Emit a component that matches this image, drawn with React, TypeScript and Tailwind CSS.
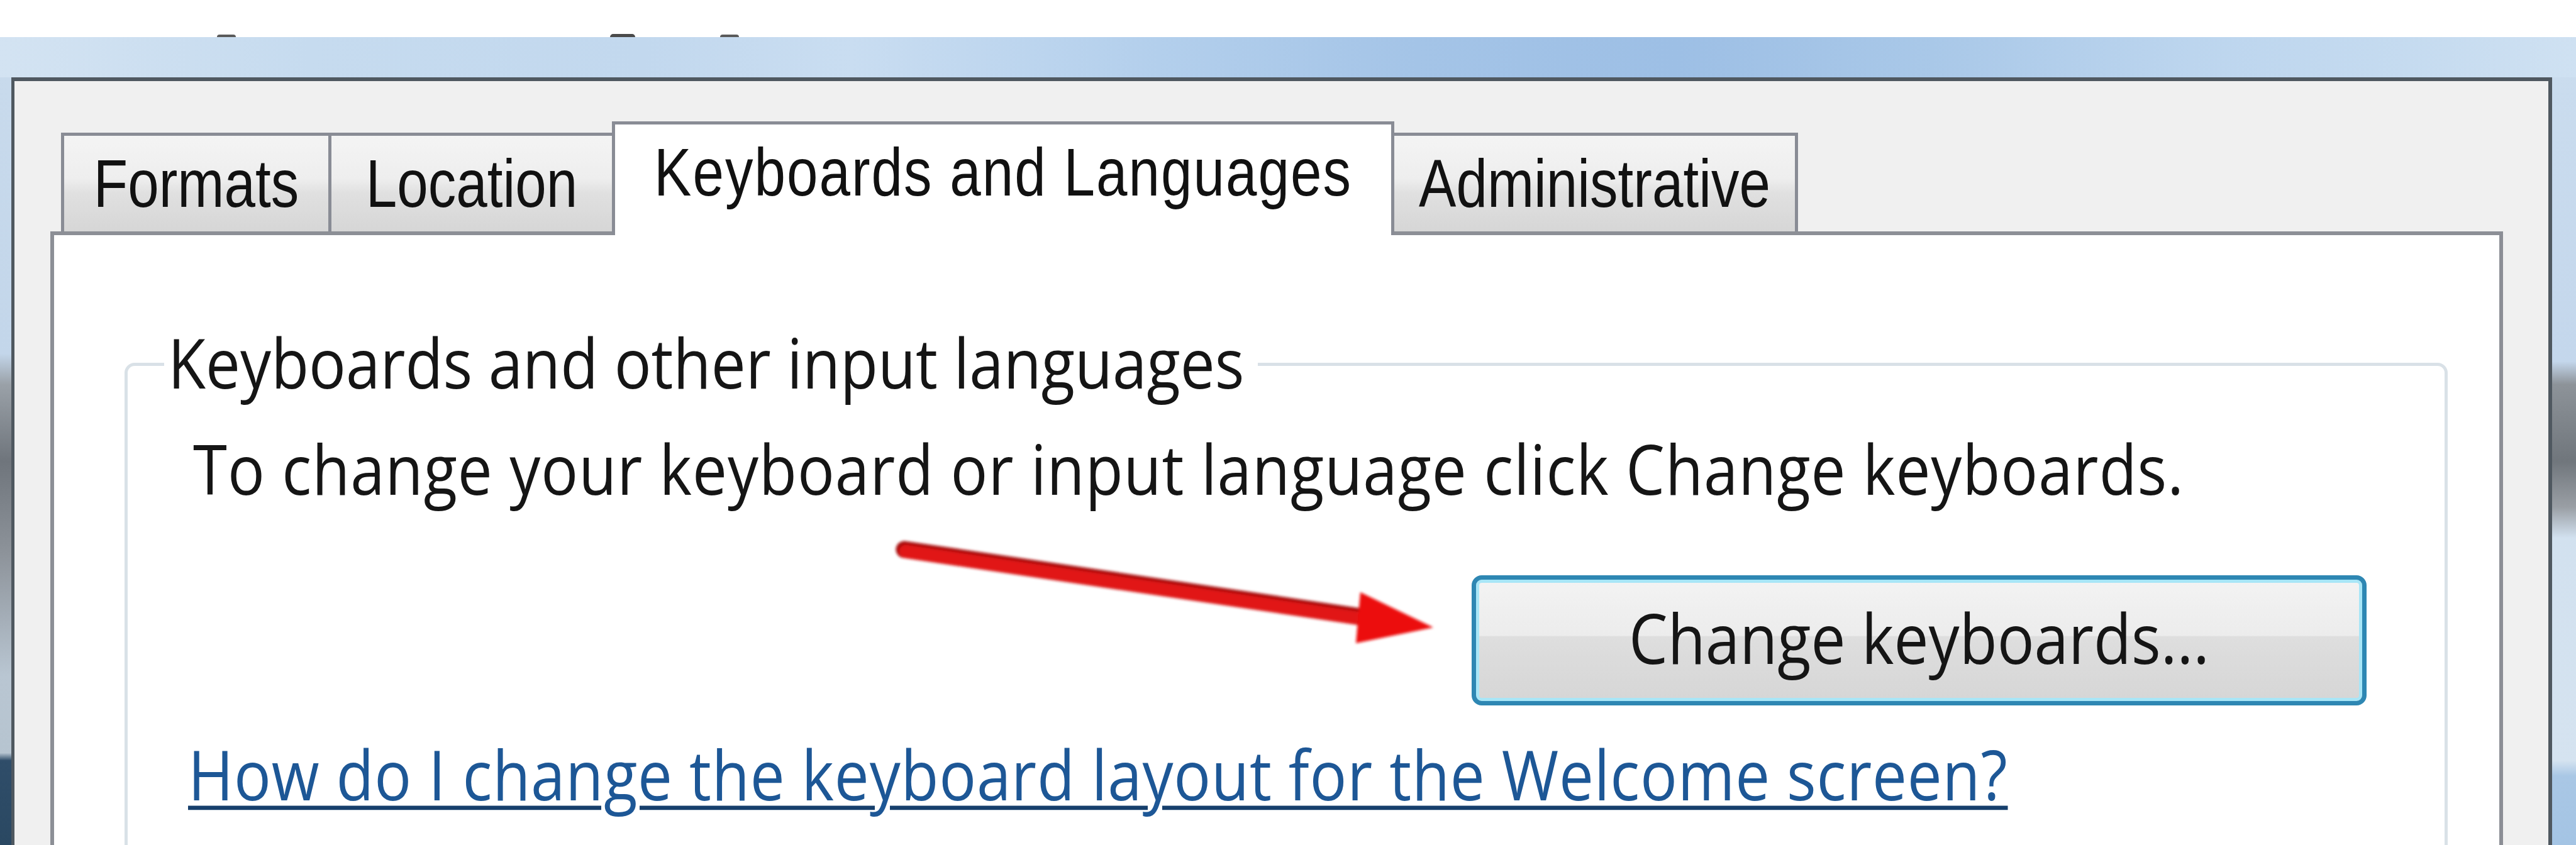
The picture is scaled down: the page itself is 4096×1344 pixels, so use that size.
import React from "react";

function Tab({
  label,
  selected,
  width,
  first,
}: {
  label: string;
  selected?: boolean;
  width: string;
  first?: boolean;
}) {
  return (
    <div
      className={[
        "flex justify-center border-[5px] border-b-0 border-[#898c95] font-['Liberation_Sans',Arial,sans-serif] text-[89px] leading-none text-[#111]",
        first ? "" : "-ml-[5px]",
        width,
        selected
          ? "relative z-10 -mb-[6px] h-[181px] bg-white pt-[32px] tracking-[2px]"
          : "h-[157px] pt-[32px] bg-[linear-gradient(180deg,#f4f4f4_0%,#eeeeee_45%,#e0e0e0_60%,#d6d6d6_100%)]",
      ].join(" ")}
    >
      <span className="inline-block h-[89px] scale-y-[1.2] whitespace-nowrap">{label}</span>
    </div>
  );
}

export default function App() {
  return (
    <div className="relative flex h-[1344px] w-[4096px] flex-col overflow-hidden bg-white font-['Open_Sans','Noto_Sans',sans-serif] text-[#151515]">
      {/* cut-off title text remnants */}
      <div className="flex h-[59px] shrink-0 items-end bg-white">
        <div className="ml-[345px] h-[4px] w-[30px] rounded-t-full bg-[#5a5a5a]" />
        <div className="ml-[595px] h-[5px] w-[40px] rounded-t-full bg-[#4a4a4a]" />
        <div className="ml-[135px] h-[4px] w-[30px] rounded-t-full bg-[#5a5a5a]" />
      </div>

      {/* title bar */}
      <div className="h-[64px] shrink-0 bg-[linear-gradient(90deg,#d3e3f2_0%,#c6dbef_12%,#c2d8ee_25%,#c9ddf1_33%,#b3cfec_45%,#a4c4e7_55%,#9dbfe5_65%,#a9c8e8_75%,#bcd5ee_85%,#c7dcf0_95%,#cfe1f2_100%)]" />

      <div className="flex min-h-0 flex-1">
        {/* left frame */}
        <div className="w-[18px] shrink-0 bg-[linear-gradient(180deg,#c8daec_0%,#c3d6ea_36%,#9aa1a8_40%,#6f757c_50%,#8d939a_62%,#b9c6d2_78%,#b6c4d0_88%,#2f4d69_89%,#2a4862_100%)]" />

        {/* dialog */}
        <div className="flex min-w-0 flex-1 flex-col border-l-[5px] border-r-[6px] border-t-[6px] border-[#4f5860] bg-[#f0f0f0]">
          {/* tab strip */}
          <div className="ml-[74px] mt-[64px] flex items-end">
            <Tab label="Formats" width="w-[430px]" first />
            <Tab label="Location" width="w-[456px]" />
            <Tab label="Keyboards and Languages" width="w-[1244px]" selected />
            <Tab label="Administrative" width="w-[647px]" />
          </div>

          {/* tab panel */}
          <div className="ml-[57px] mr-[72px] flex-1 border-[6px] border-b-0 border-[#8c8f96] bg-white">
            <fieldset className="ml-[112px] mr-[82px] mt-[152px] min-h-[1000px] rounded-[16px] border-[5px] border-[#d9e1e7]">
              <legend className="ml-[58px] pb-[8px] pl-[6px] pr-[22px] text-[98px] leading-none">
                <span className="inline-block scale-y-[1.12] whitespace-nowrap">
                  Keyboards and other input languages
                </span>
              </legend>

              <div className="ml-[104px] mt-[63px] h-[98px] scale-y-[1.12] whitespace-nowrap text-[98px] leading-none tracking-[0.95px]">
                To change your keyboard or input language click Change keyboards.
              </div>

              <div className="mr-[124px] mt-[122px] flex justify-end">
                <button
                  type="button"
                  className="flex h-[207px] w-[1423px] items-center justify-center rounded-[16px] border-[7px] border-[#2e87b3] bg-[linear-gradient(180deg,#f3f3f3_0%,#ececec_46%,#dedede_47%,#d6d6d6_100%)] pb-[12px] text-[98px] leading-none text-[#151515] shadow-[inset_0_0_0_5px_#a8e6f7]"
                >
                  <span className="inline-block scale-y-[1.12] whitespace-nowrap">Change keyboards...</span>
                </button>
              </div>

              <div className="ml-[96px] mt-[59px] h-[98px] scale-y-[1.12] text-[98px] leading-none tracking-[0.75px]">
                <a
                  href="#"
                  className="whitespace-nowrap text-[#1d5796] underline decoration-[#163f6c] decoration-[6px] underline-offset-[8px]"
                >
                  How do I change the keyboard layout for the Welcome screen?
                </a>
              </div>
            </fieldset>
          </div>
        </div>

        {/* right frame */}
        <div className="w-[38px] shrink-0 bg-[linear-gradient(180deg,#cadcee_0%,#c4d7ec_37%,#8d9399_40%,#70767c_50%,#9a9fa5_56%,#d2e1ef_60%,#d5e3f0_89%,#a9c7e5_91%,#a4c4e4_100%)]" />
      </div>

      {/* red annotation arrow */}
      <svg
        className="pointer-events-none absolute left-[1400px] top-[840px] h-[220px] w-[920px]"
        viewBox="0 0 920 220"
      >
        <defs>
          <filter id="soft" x="-10%" y="-50%" width="120%" height="200%">
            <feGaussianBlur stdDeviation="2.2" />
          </filter>
        </defs>
        <g filter="url(#soft)">
          <line x1="38" y1="34" x2="770" y2="142" stroke="#a80a0a" strokeWidth="27" strokeLinecap="round" />
          <line x1="40" y1="37" x2="772" y2="145" stroke="#e11212" strokeWidth="21" strokeLinecap="round" />
          <polygon points="763,102 756,183 879,158" fill="#ec1010" />
        </g>
      </svg>
    </div>
  );
}
